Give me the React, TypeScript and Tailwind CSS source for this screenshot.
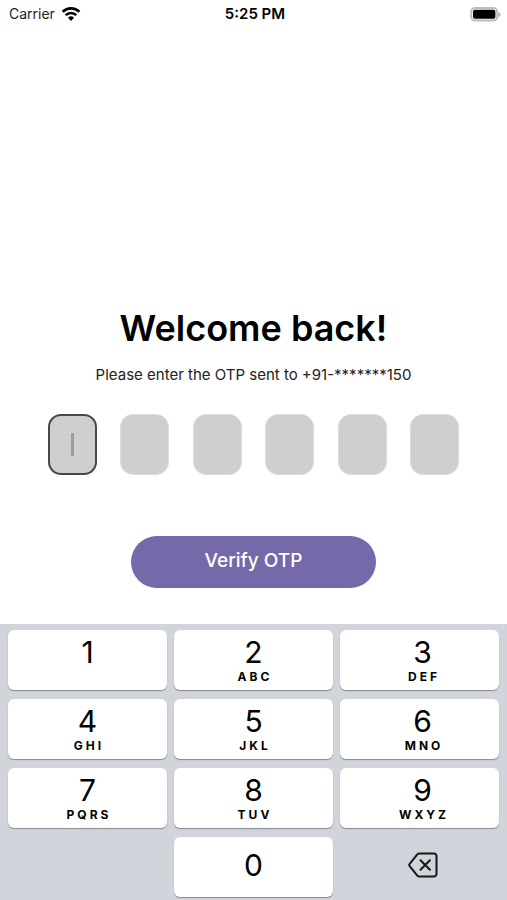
const FONT = 'font-["Inter","Liberation_Sans",sans-serif]';

const KEYS = [
  { digit: "1", letters: "" },
  { digit: "2", letters: "ABC" },
  { digit: "3", letters: "DEF" },
  { digit: "4", letters: "GHI" },
  { digit: "5", letters: "JKL" },
  { digit: "6", letters: "MNO" },
  { digit: "7", letters: "PQRS" },
  { digit: "8", letters: "TUV" },
  { digit: "9", letters: "WXYZ" },
];

const KEY_STYLE =
  "flex h-[60px] flex-col items-center rounded-md bg-white text-black shadow-[0_1px_1px_#85888d]";

function WifiIcon() {
  return (
    <svg width="20" height="15" viewBox="0 0 20 15" aria-hidden="true" fill="none" stroke="#000" strokeWidth="2.6">
      <path d="M1.6 4.8a12 12 0 0 1 16.8 0" />
      <path d="M4.7 8.2a7.5 7.5 0 0 1 10.6 0" />
      <path d="M10 13.900 7 10.800a4.300 4.300 0 0 1 6 0Z" fill="#000" stroke="none" />
    </svg>
  );
}

function BatteryIcon() {
  return (
    <svg width="31" height="15" viewBox="0 0 31 15" aria-hidden="true">
      <rect x="1.200" y="1" width="26" height="12.600" rx="4" fill="#fff" stroke="#bcbcbc" strokeWidth="2" />
      <rect x="3" y="2.800" width="22.400" height="9" rx="2" fill="#000" />
      <path d="M28.500 5v5c1.200-.4 2-1.300 2-2.500s-.8-2.100-2-2.500Z" fill="#aaa" />
    </svg>
  );
}

function StatusBar() {
  return (
    <header className="grid h-7 grid-cols-3 items-center pl-[9px] pr-[6px]">
      <div className="flex items-center gap-[6px] text-sm text-[#222]">
        <span>Carrier</span>
        <WifiIcon />
      </div>
      <time className="text-center text-[15px] font-semibold">5:25 PM</time>
      <div className="flex justify-end">
        <BatteryIcon />
      </div>
    </header>
  );
}

function CodeFields() {
  return (
    <div role="group" aria-label="One-time password" className="mt-[29px] flex w-full max-w-[412px] justify-between">
      {[1, 2, 3, 4, 5, 6].map((n) => (
        <div key={n} className="relative">
          <input
            type="text"
            inputMode="numeric"
            maxLength={1}
            aria-label={`Digit ${n}`}
            className={
              n === 1
                ? "block h-[61px] w-[49px] rounded-[13px] border-2 border-[#484848] bg-[#cfcfcf] text-center text-xl outline-none"
                : "block h-[61px] w-[49px] rounded-[13px] border border-[#dcdcdc] bg-[#cfcfcf] text-center text-xl outline-none"
            }
          />
          {n === 1 && (
            <span className="pointer-events-none absolute inset-0 m-auto h-[23px] w-[3px] bg-[#9c9c9c]" />
          )}
        </div>
      ))}
    </div>
  );
}

function Keypad() {
  return (
    <section
      aria-label="Number pad"
      className="grid grid-cols-3 gap-x-[7px] gap-y-[9px] bg-[#d1d4db] px-2 pt-[6px] pb-[3px]"
    >
      {KEYS.map(({ digit, letters }) => (
        <button key={digit} type="button" className={`${KEY_STYLE} nth-[3n]:pl-[6px]`}>
          <span className="mt-1 text-[30px] leading-9">{digit}</span>
          <span className="pl-[3px] text-xs leading-[14px] font-bold tracking-[3px]">{letters}</span>
        </button>
      ))}
      <button type="button" className={`${KEY_STYLE} col-start-2 justify-center pb-1`}>
        <span className="text-[30px] leading-9">0</span>
      </button>
      <button type="button" aria-label="Delete" className="flex items-center justify-center pb-1 pl-[6px]">
        <svg width="30" height="26" viewBox="0 0 30 26" fill="none" stroke="#151619" strokeWidth="2" strokeLinejoin="round" strokeLinecap="round" aria-hidden="true">
          <path d="M11.500 1.500H26a2.500 2.500 0 0 1 2.500 2.500v18a2.500 2.500 0 0 1-2.500 2.500H11.500a3 3 0 0 1-2.200-.9L1.900 14.400a2 2 0 0 1 0-2.800L9.300 2.400a3 3 0 0 1 2.200-.9Z" />
          <path d="m12.500 8.200 9.400 9.600m0-9.600-9.400 9.600" />
        </svg>
      </button>
    </section>
  );
}

export default function App() {
  return (
    <div className={`${FONT} flex min-h-screen flex-col bg-white text-black`}>
      <StatusBar />
      <main className="flex flex-1 flex-col items-center justify-end px-6 pb-[36px]">
        <h1 className="text-4xl leading-[48px] font-semibold">Welcome back!</h1>
        <p className="mt-[13px] text-[15px] leading-5 text-[#222]">
          Please enter the OTP sent to +91-*******150
        </p>
        <CodeFields />
        <button
          type="button"
          className="mt-[61px] h-[52px] w-[245px] rounded-full bg-[#7569aa] pb-[2px] text-[19px] font-medium text-white"
        >
          Verify OTP
        </button>
      </main>
      <Keypad />
    </div>
  );
}
